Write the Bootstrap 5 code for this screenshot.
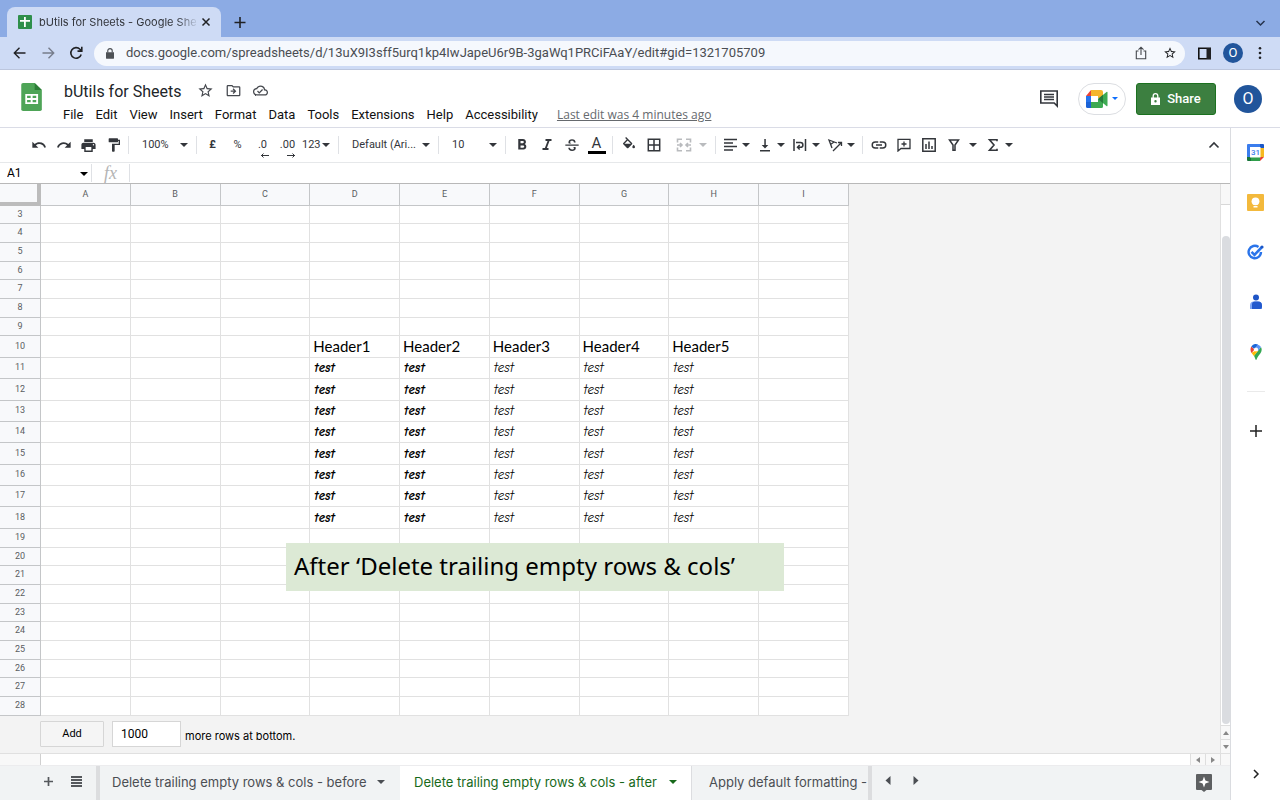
<!DOCTYPE html>
<html lang="en">
<head>
<meta charset="utf-8">
<meta name="viewport" content="width=device-width, initial-scale=1">
<title>bUtils for Sheets - Google Sheets</title>
<link href="https://cdn.jsdelivr.net/npm/bootstrap@5.3.0/dist/css/bootstrap.min.css" rel="stylesheet">
<style>
body{font-family:Roboto,"Liberation Sans",sans-serif;font-size:13px;line-height:16px;color:#000;background:#fff}
svg{display:block;flex:none}
svg:not([fill]){fill:currentColor}
button{font-family:inherit;color:inherit;background:none;border:0;padding:0}
.ic{display:flex;align-items:center;justify-content:center;flex:none}
.caret{width:0;height:0;border:4px solid transparent;border-top-color:currentColor;border-bottom:0;flex:none}
/* browser */
.strip{height:37px;background:#8cabe4;padding:7px 8px 0 7px}
.btab{width:214px;height:30px;background:#cedbf5;border-radius:8px 8px 0 0;padding:0 10px 0 11px;font:11px/16px Inter,sans-serif;color:#33363c}
.btab-title{width:160px;margin-left:7px;-webkit-mask-image:linear-gradient(90deg,#000 86%,transparent)}
.addr{height:33px;background:#cedbf5;border-bottom:1px solid #bcc6dd;padding:0 18px 0 11px;color:#202124}
.addr-icon{margin-left:10px}
.omni{height:25px;background:#f5f8fd;border-radius:13px;padding:0 8px 0 12px;margin-left:9px;margin-right:9px}
.omni input{border:0;background:none;padding:0;font-size:13px;color:#4a4d52;outline:0;min-width:0}
.face{border-radius:50%;background:#21559b;color:#fff}
.face-small{width:20px;height:20px;margin:0 11px 0 12px}
.face-large{width:28px;height:28px;font-size:16px;margin-left:18px}
/* document header */
.dochead{height:58px;border-bottom:1px solid #dadce6;padding:0 18px 0 16px}
.doctitle{font-size:16px;line-height:20px;margin:0;font-weight:400}
.docmenu{gap:12px;margin:5px 0 0 -1px}
.docmenu a{color:#111;text-decoration:none}
.docmenu a.edited{font-family:"Open Sans",sans-serif;font-size:12px;color:#666a6e;text-decoration:underline;margin-left:7px}
.meet{width:48px;height:32px;border:1px solid #dcdee2;border-radius:16px;gap:4px}
.meet .caret{border-width:3px 3px 0}
.share{width:80px;height:32px;background:#3c7f40;border:1px solid #1b711f;border-radius:3px;color:#fff;font-size:13px;font-weight:500;gap:7px;margin-left:10px}
/* toolbar */
.tools{height:35px;border-bottom:1px solid #e6e8ea;padding-left:26px;font-size:11px;color:#33363b}
.tools button{height:24px;display:flex;align-items:center;flex:none}
.tb{width:25px;justify-content:center}
.tb-drop{width:35px;padding-left:3px;gap:4px}
.tb-wide{padding-left:5px;gap:7px;width:41px}
.tb-merge{padding-left:10px;gap:7px;width:46px;color:#b9bbbe}
.tb-text{justify-content:space-between;padding:0 5px 0 10px}
.tb-zoom{width:61px}.tb-font{width:93px}.tb-size{width:60px}
.tb-format{width:35px;padding-left:2px;gap:1px}
.tsep{width:1px;height:18px;background:#dfe1e5;margin:0 3px;flex:none}
.tools .tsep:first-of-type{margin-left:2px}
.tb-color{border-bottom:3px solid #000;line-height:15px;width:18px;font-size:15px}
.fbar{height:21px;border-bottom:1px solid #b8b8b8}
.fbar input{border:0;outline:0;padding:0;min-width:0}
.namebox{width:70px;font-size:12px;margin-left:7px}
.namedrop{width:14px;padding-top:2px}
.fx{font:italic 18px/18px "Liberation Serif",serif;color:#b4b4b4;padding:0 9px}
/* grid */
.canvas{background:#f3f3f3;min-height:0}
.sheetwrap{min-width:0}
.cells{width:849px;table-layout:fixed;border-collapse:separate;border-spacing:0;line-height:14px}
.cells th,.cells td{padding:0 0 0 3px;border-right:1px solid #e1e1e1;border-bottom:1px solid #e1e1e1;background:#fff;font-weight:400;overflow:hidden;white-space:nowrap;vertical-align:middle}
.cells tr{height:19px}
.cells thead tr{height:22px}
.cells thead th,.cells tbody th{background:#f8f9fb;color:#5a5d61;font:9px/14px Roboto,sans-serif;text-align:center;padding:0 0 2px;border-color:#c4c6c8}
.cells thead th:first-child{border-right:4px solid #bcbcbc;border-bottom:4px solid #bcbcbc}
.upper tr:nth-child(3n+1),.lower tr:nth-child(3n+2){height:18px}
.data tr{height:21px}
.data tr:first-child,.data tr:nth-child(3n){height:22px}
.data tr:first-child td{font:15px/18px Lato,sans-serif;padding-bottom:2px}
.cells .script{font:italic 13px/16px "Comic Neue",Lato,sans-serif;padding-left:4px}
.cells .heavy{font-weight:700}
.note{left:286px;top:359px;width:498px;height:48px;background:#dce9d5;padding:0 8px;font:24px/46px "Noto Sans",sans-serif}
.addrow{padding:5px 0 0 40px;gap:8px}
.addrow button{width:64px;height:26px;border:1px solid #d6d6d6;background:#f5f5f5;font-size:11px;border-radius:1px}
.addrow input{width:69px;height:26px;border:1px solid #d6d6d6;padding:0 8px;font-size:12px;border-radius:0}
.addrow label{font:11px/16px Inter,sans-serif;margin:4px 0 0 -4px}
.vbar{width:10px;border-left:1px solid #e0e0e0;background:#fff}
.vcap{height:21px;border-bottom:1px solid #d8d8d8;background:#f8f8f8}
.thumb{background:#dadce0;border-radius:4px;margin:31px 0 1px 1px}
.sbtn{background:#f8f8f8;border:0 solid #dedede;color:#888}
.vbar .sbtn{height:14px;border-top-width:1px}
.hbar{height:12px;border-top:1px solid #e0e0e0}
.hbar .sbtn{width:15px;border-left-width:1px}
.hbar .sbtn-corner{width:10px}
.hcap{width:41px;background:#f8f8f8;border-right:1px solid #d0d0d0}
/* sheet tabs */
.sheets{height:35px;background:#f1f3f4;font:13px/16px Inter,sans-serif;color:#4b4e53;border-top:1px solid #ececee}
.sheets-add{margin-left:42px}
.stab{height:34px;padding:0 13px 2px 12px;display:flex;align-items:center;gap:9px;white-space:nowrap}
.stab-first{width:304px;margin-left:14px;border-left:4px solid #dcdddf!important;padding-right:15px;justify-content:space-between}
.stab-on{background:#fff;color:#17691b;width:292px;padding:0 14px 2px;justify-content:space-between;border-right:1px solid #dcdde0!important}
.stab-cut{width:180px;padding:0 0 2px 17px;overflow:hidden;border-right:4px solid #dcdddf!important}
.sheets-nav{gap:22px;margin:0 auto 0 13px}
.explore{margin-right:18px}
.rail{width:50px;border-left:1px solid #dadce0;padding-top:14px}
.rail button{height:20px;margin-bottom:30px}
.rail hr{width:18px;margin:-1px 0 29px;border-color:#aaa}
</style>
</head>
<body class="vh-100 d-flex flex-column overflow-hidden">
<div class="strip d-flex">
  <div class="btab d-flex align-items-center">
    <svg width="14" height="14" viewBox="0 0 14 14"><rect width="14" height="14" rx="1" fill="#2f8f4b"/><path fill="#fff" d="M6 2h1.800v3H12v1.700H7.800V12H6V6.700H2V5h4z"/></svg>
    <span class="btab-title text-nowrap overflow-hidden">bUtils for Sheets - Google She</span>
    <button class="ic ms-auto" aria-label="Close tab"><svg width="10" height="10" viewBox="0 0 10 10" stroke="#202124" stroke-width="1.500"><path d="M1.500 1.500l7 7m0-7l-7 7"/></svg></button>
  </div>
  <button class="ic ms-2 ps-1" aria-label="New tab"><svg width="14" height="30" viewBox="0 0 14 30" stroke="#202124" stroke-width="1.600"><path d="M7 10v11M1.500 15.500h11"/></svg></button>
  <button class="ic ms-auto" aria-label="Search tabs"><svg width="24" height="28" viewBox="0 0 24 28" fill="none" stroke="#26334d" stroke-width="1.500"><path d="M8.500 13l4 4 4-4"/></svg></button>
</div>
<div class="addr d-flex align-items-center">
  <button class="ic" aria-label="Back"><svg width="18" height="18" viewBox="0 0 18 18" fill="none" stroke="currentColor" stroke-width="1.400"><path d="M14.500 9H3.500M8.500 3.800L3.300 9l5.200 5.200"/></svg></button>
  <button class="ic opacity-50 addr-icon" aria-label="Forward"><svg width="18" height="18" viewBox="0 0 18 18" fill="none" stroke="currentColor" stroke-width="1.400"><path d="M3.500 9h11M9.500 3.800L14.700 9l-5.200 5.200"/></svg></button>
  <button class="ic addr-icon" aria-label="Reload"><svg width="18" height="18" viewBox="0 0 18 18" fill="none" stroke="currentColor" stroke-width="1.600"><path d="M14.200 10.500A5.300 5.300 0 1 1 13 5.300L14.300 6.600M14.800 2.800v4.300h-4.300"/></svg></button>
  <div class="omni flex-fill d-flex align-items-center">
    <svg width="8" height="11" viewBox="0 0 9 12"><path fill="#4d5156" d="M0 4.500h9V11a1 1 0 0 1-1 1H1a1 1 0 0 1-1-1z"/><path d="M2 5V3a2.500 2.500 0 0 1 5 0v2" fill="none" stroke="#4d5156" stroke-width="1.300"/></svg>
    <input class="flex-fill ms-2 ps-1" aria-label="Address" value="docs.google.com/spreadsheets/d/13uX9I3sff5urq1kp4IwJapeU6r9B-3gaWq1PRCiFAaY/edit#gid=1321705709">
    <button class="ic" aria-label="Share page"><svg width="12" height="14" viewBox="0 0 12 14" fill="none" stroke="#44474d" stroke-width="1.100"><path d="M3.500 5H1.300v7.700h9.400V5H8.500M6 9V1.300M3.500 3.700L6 1.200l2.500 2.500"/></svg></button>
    <button class="ic ms-3" aria-label="Bookmark"><svg width="14" height="14" viewBox="0 0 24 24"><path d="M22 9.240l-7.190-.62L12 2 9.190 8.630 2 9.240l5.460 4.730L5.820 21 12 17.270 18.180 21l-1.630-7.030zM12 15.400l-3.760 2.270 1-4.280-3.320-2.880 4.380-.38L12 6.100l1.710 4.040 4.380.38-3.320 2.880 1 4.280z"/></svg></button>
  </div>
  <button class="ic ms-1" aria-label="Side panel"><svg width="13" height="13" viewBox="0 0 13 13"><path fill="none" stroke="#111" stroke-width="1.600" d="M.8 1.300h11.400v10.400H.8z"/><path d="M8.500 1H13v11H8.500z"/></svg></button>
  <button class="ic face face-small" aria-label="Profile">O</button>
  <button class="ic ms-1" aria-label="Browser menu"><svg width="4" height="14" viewBox="0 0 4 14"><circle cx="2" cy="2.200" r="1.300"/><circle cx="2" cy="7" r="1.300"/><circle cx="2" cy="11.800" r="1.300"/></svg></button>
</div>

<header class="dochead d-flex">
  <svg class="mt-2 pt-1" width="32" height="38" viewBox="0 0 32 38"><path fill="#4ea457" d="M6 1h13l8 8v21.500a2 2 0 0 1-2 2H6a2 2 0 0 1-2-2V3a2 2 0 0 1 2-2z"/><path fill="#2c7d37" d="M19 1l8 8h-8z"/><path fill="#fff" fill-rule="evenodd" d="M8.500 13.500h14.300v11H8.500zM10.500 15.500v2.500h4v-2.500zm6.200 0v2.500h4v-2.500zm-6.200 4.500v2.500h4V20zm6.200 0v2.500h4V20z"/></svg>
  <div class="ms-3">
    <div class="d-flex align-items-center pt-2 mt-0 text-dark">
      <h1 class="doctitle pt-1">bUtils for Sheets</h1>
      <button class="ic ms-3" aria-label="Star"><svg width="17" height="17" viewBox="0 0 24 24" fill="#44474d"><path d="M22 9.240l-7.190-.62L12 2 9.190 8.630 2 9.240l5.460 4.730L5.820 21 12 17.270 18.180 21l-1.630-7.030zM12 15.400l-3.760 2.270 1-4.280-3.320-2.880 4.380-.38L12 6.100l1.710 4.040 4.380.38-3.320 2.880 1 4.280z"/></svg></button>
      <button class="ic ms-2 ps-1" aria-label="Move"><svg width="15" height="15" viewBox="0 0 24 24" fill="#44474d"><path d="M21 5h-9l-2-2H3a2 2 0 0 0-2 2v14c0 1.100.9 2 2 2h18a2 2 0 0 0 2-2V7a2 2 0 0 0-2-2zm0 14H3V5h6.200l2 2H21zM12 8.500l4.500 4.500-4.500 4.500-1.400-1.400 2-2H7.500v-2h5.100l-2-2z"/></svg></button>
      <button class="ic ms-2 ps-1" aria-label="Saved to Drive"><svg width="15" height="15" viewBox="0 0 24 24" fill="#44474d"><path d="M19.350 10.040A7.490 7.490 0 0 0 12 4C9.110 4 6.600 5.640 5.350 8.040A5.994 5.994 0 0 0 0 14c0 3.310 2.690 6 6 6h13c2.760 0 5-2.240 5-5 0-2.640-2.050-4.780-4.650-4.960zM19 18H6c-2.210 0-4-1.790-4-4s1.790-4 4-4h.71C7.370 7.690 9.480 6 12 6c3.040 0 5.500 2.460 5.500 5.500v.5H19c1.660 0 3 1.340 3 3s-1.340 3-3 3zM10 14.200l-2.100-2.100-1.400 1.400L10 17l6-6-1.400-1.400z"/></svg></button>
    </div>
    <nav class="docmenu d-flex text-nowrap">
      <a href="#">File</a><a href="#">Edit</a><a href="#">View</a><a href="#">Insert</a><a href="#">Format</a><a href="#">Data</a><a href="#">Tools</a><a href="#">Extensions</a><a href="#">Help</a><a href="#">Accessibility</a><a href="#" class="edited">Last edit was 4 minutes ago</a>
    </nav>
  </div>
  <div class="ms-auto d-flex align-items-center">
    <button class="ic me-3 pe-1" aria-label="Comments"><svg width="18" height="18" viewBox="0 0 18 18"><path fill="none" stroke="#33363c" stroke-width="1.600" d="M.8 1h16.400v15l-3-3H.8z"/><path fill="none" stroke="#33363c" stroke-width="1.300" d="M4 4.500h10M4 7h10M4 9.500h10"/></svg></button>
    <button class="meet ic" aria-label="Meet"><svg width="22" height="18" viewBox="0 0 22 18"><path fill="#e94235" d="M0 6l5-6v6z"/><path fill="#f4b52b" d="M5 0h10a2 2 0 0 1 2 2v7l-5-1V6H5z"/><path fill="#2573ec" d="M0 6h5v6H0z"/><path fill="#1b62d6" d="M0 12h5v6H1.500A1.500 1.500 0 0 1 0 16.500z"/><path fill="#3daa53" d="M5 12h7v-3h5v7.500a1.500 1.500 0 0 1-1.500 1.500H5z"/><path fill="#fff" d="M5 6h7v6H5z"/><path fill="#3daa53" d="M12 9l8.500-7q1-.5 1 .6v13q0 1-1 .4z"/><path fill="#267a3b" d="M12 9l5-4.200v8.400z"/></svg><span class="caret text-primary"></span></button>
    <button class="share ic"><svg width="9" height="12" viewBox="0 0 9 12"><path fill="none" stroke="#fff" stroke-width="1.300" d="M2.200 5V3a2.300 2.300 0 0 1 4.600 0v2"/><path fill-rule="evenodd" d="M0 4.500h9V12H0zM4.500 7a1.200 1.200 0 1 0 0 2.400A1.200 1.200 0 0 0 4.500 7z"/></svg>Share</button>
    <button class="face face-large ic" aria-label="Account">O</button>
  </div>
</header>

<div class="d-flex flex-fill canvas bg-white">
  <main class="flex-fill d-flex flex-column sheetwrap">
    <div class="tools d-flex align-items-center" role="toolbar">
      <button class="tb" aria-label="Undo"><svg width="16" height="16" viewBox="0 0 24 24"><path d="M12.500 8c-2.650 0-5.050.99-6.900 2.600L2 7v9h9l-3.620-3.620a8 8 0 0 1 12.720 3.720l2.370-.78A10.500 10.500 0 0 0 12.500 8z"/></svg></button>
      <button class="tb" aria-label="Redo"><svg width="16" height="16" viewBox="0 0 24 24"><path d="M18.400 10.600A10.500 10.500 0 0 0 1.540 15.320l2.360.78a8 8 0 0 1 12.710-3.720L13 16h9V7z"/></svg></button>
      <button class="tb" aria-label="Print"><svg width="17" height="17" viewBox="0 0 24 24"><path fill-rule="evenodd" d="M19 8H5c-1.660 0-3 1.340-3 3v6h4v4h12v-4h4v-6c0-1.660-1.340-3-3-3zm-3 11H8v-5h8v5zm3-7a1 1 0 1 1 0-2 1 1 0 0 1 0 2zM18 3H6v4h12z"/></svg></button>
      <button class="tb" aria-label="Paint format"><svg width="16" height="16" viewBox="0 0 24 24"><path d="M18 4V3a1 1 0 0 0-1-1H5a1 1 0 0 0-1 1v4c0 .55.45 1 1 1h12c.55 0 1-.45 1-1V6h1v4H9v11c0 .55.45 1 1 1h2c.55 0 1-.45 1-1v-9h8V4z"/></svg></button>
      <i class="tsep"></i>
      <button class="tb-text tb-zoom">100%<span class="caret"></span></button>
      <i class="tsep"></i>
      <button class="tb fw-bold">£</button>
      <button class="tb">%</button>
      <button class="tb" aria-label="Decrease decimal places"><span class="ic flex-column pt-1"><span>.0</span><svg width="9" height="5" viewBox="0 0 9 5" stroke="currentColor" class="ms-1"><path d="M1 2.500h8M3.500.5l-2 2 2 2" fill="none"/></svg></span></button>
      <button class="tb" aria-label="Increase decimal places"><span class="ic flex-column pt-1"><span>.00</span><svg width="9" height="5" viewBox="0 0 9 5" stroke="currentColor" class="ms-2"><path d="M0 2.500h8M5.500.5l2 2-2 2" fill="none"/></svg></span></button>
      <button class="tb-format">123<span class="caret"></span></button>
      <i class="tsep"></i>
      <button class="tb-text tb-font">Default (Ari...<span class="caret"></span></button>
      <i class="tsep"></i>
      <button class="tb-text tb-size">10<span class="caret"></span></button>
      <i class="tsep"></i>
      <button class="tb" aria-label="Bold"><svg width="18" height="18" viewBox="0 0 24 24"><path d="M15.600 10.790c.97-.67 1.650-1.770 1.650-2.790 0-2.260-1.750-4-4-4H7v14h7.040c2.090 0 3.710-1.700 3.710-3.790 0-1.520-.86-2.820-2.150-3.420zM10 6.500h3a1.500 1.500 0 0 1 0 3h-3zm3.500 9H10v-3h3.500a1.500 1.500 0 0 1 0 3z"/></svg></button>
      <button class="tb" aria-label="Italic"><svg width="18" height="18" viewBox="0 0 24 24"><path d="M10 4v2.500h2.700L9.200 16H6v2.500h8V16h-2.200l3.500-9.500H18V4z"/></svg></button>
      <button class="tb" aria-label="Strikethrough"><svg width="16" height="16" viewBox="0 0 24 24"><path d="M2 11.300h20v1.900H2zM17.500 8.300h-2.600c0-1.600-1-2.500-2.900-2.500-1.700 0-2.700.8-2.700 1.900 0 .9.600 1.400 1.700 1.900H7.200A3.600 3.600 0 0 1 6.700 7.700C6.700 5.200 8.900 3.500 12 3.500c3.400 0 5.500 1.900 5.500 4.800zM6.400 16.300H9c0 1.700 1.200 2.500 3.100 2.500 1.700 0 2.800-.7 2.800-1.900 0-.9-.5-1.500-1.300-2h3.500c.3.600.5 1.200.5 2 0 2.600-2.200 4.200-5.500 4.200-3.500 0-5.700-1.900-5.700-4.800z"/></svg></button>
      <button class="tb" aria-label="Text colour"><span class="tb-color text-center">A</span></button>
      <i class="tsep"></i>
      <button class="tb" aria-label="Fill colour"><svg width="16" height="16" viewBox="0 0 24 24"><path d="M16.560 8.940L7.620 0 6.210 1.410l2.380 2.380-5.150 5.150a1.490 1.490 0 0 0 0 2.120l5.500 5.500c.29.290.68.440 1.060.44s.77-.15 1.060-.44l5.500-5.500c.59-.58.59-1.530 0-2.120zM5.210 10L10 5.210 14.790 10zM19 11.500s-2 2.170-2 3.500a2 2 0 1 0 4 0c0-1.330-2-3.500-2-3.500z"/></svg></button>
      <button class="tb" aria-label="Borders"><svg width="14" height="14" viewBox="0 0 14 14" fill="none" stroke="currentColor" stroke-width="1.500"><path d="M1.300 1.300h11.400v11.400H1.300zM7 1v12M1 7h12"/></svg></button>
      <button class="tb-merge" aria-label="Merge cells"><svg width="16" height="14" viewBox="0 0 16 14" fill="none" stroke="currentColor" stroke-width="1.600"><path d="M6 1.300H1.500V4.500M1.500 9.500v3.200H6M10 1.300h4.500V4.500M14.500 9.500v3.200H10M1 7h5M4 5l2 2-2 2M15 7h-5M12 5l-2 2 2 2"/></svg><span class="caret"></span></button>
      <i class="tsep"></i>
      <button class="tb-drop" aria-label="Horizontal align"><svg width="16" height="14" viewBox="0 0 16 14" stroke="currentColor" stroke-width="1.500"><path d="M2 1.500h13M2 5h9M2 8.500h13M2 12h9"/></svg><span class="caret"></span></button>
      <button class="tb-drop" aria-label="Vertical align"><svg width="16" height="14" viewBox="0 0 16 14"><path d="M3 12h10v1.500H3zM7.300 1h1.500v6h2.500L8 10.500 4.700 7h2.600z"/></svg><span class="caret"></span></button>
      <button class="tb-drop" aria-label="Text wrapping"><svg width="16" height="14" viewBox="0 0 16 14" fill="none" stroke="currentColor" stroke-width="1.500"><path d="M2 1v12M13.500 1v12M4 4.500h4.500a2.300 2.300 0 0 1 0 4.800H6M7.700 7L5.500 9.300l2.200 2.200"/></svg><span class="caret"></span></button>
      <button class="tb-drop" aria-label="Text rotation"><svg width="16" height="14" viewBox="0 0 16 14" fill="none" stroke="currentColor" stroke-width="1.300"><path d="M5 10L2 2l8 3M3.500 6.500L7 4M6 13l8-8M11 4.500h3.500V8"/></svg><span class="caret"></span></button>
      <i class="tsep"></i>
      <button class="tb" aria-label="Insert link"><svg width="18" height="18" viewBox="0 0 24 24"><path d="M3.900 12A3.100 3.100 0 0 1 7 8.900h4V7H7a5 5 0 0 0 0 10h4v-1.900H7A3.100 3.100 0 0 1 3.900 12zM8 13h8v-2H8zm9-6h-4v1.900h4a3.100 3.100 0 0 1 0 6.200h-4V17h4a5 5 0 0 0 0-10z"/></svg></button>
      <button class="tb" aria-label="Insert comment"><svg width="14" height="14" viewBox="0 0 14 14" fill="none" stroke="currentColor" stroke-width="1.300"><path d="M1 1.300h12v9.200H4L1 13zM7 3.500v5M4.500 6h5"/></svg></button>
      <button class="tb" aria-label="Insert chart"><svg width="14" height="14" viewBox="0 0 14 14" fill="none" stroke="currentColor" stroke-width="1.500"><path d="M.8.800h12.400v12.400H.8zM4 6v5M7 3.500V11M10 8v3"/></svg></button>
      <button class="tb-wide" aria-label="Filter"><svg width="16" height="14" viewBox="0 0 16 14" fill="none" stroke="currentColor" stroke-width="1.500"><path d="M3.500 2h9L9 7v5.200H7V7z"/></svg><span class="caret"></span></button>
      <button class="tb-drop" aria-label="Functions"><svg width="16" height="14" viewBox="0 0 16 14" fill="none" stroke="currentColor" stroke-width="1.600"><path d="M12 3.200V1.800H4.500L9 7l-4.500 5.200H12v-1.500"/></svg><span class="caret"></span></button>
      <button class="tb ms-auto me-1" aria-label="Hide menus"><svg width="12" height="8" viewBox="0 0 12 8" fill="none" stroke="currentColor" stroke-width="1.600"><path d="M1.500 6.500L6 2l4.500 4.500"/></svg></button>
    </div>
    <div class="fbar d-flex align-items-center">
      <input class="namebox" aria-label="Name box" value="A1">
      <button class="ic namedrop" aria-label="Named ranges"><span class="caret"></span></button>
      <i class="tsep ms-0"></i>
      <label for="fxin" class="fx">fx</label>
      <i class="tsep"></i>
      <input id="fxin" class="flex-fill">
    </div>
    <div class="canvas flex-fill d-flex overflow-hidden">
      <div class="sheetwrap flex-fill position-relative overflow-hidden">
        <table class="cells" id="cells">
          <colgroup><col style="width:41px"><col span="9"></colgroup>
          <thead><tr><th></th><th>A</th><th>B</th><th>C</th><th>D</th><th>E</th><th>F</th><th>G</th><th>H</th><th>I</th></tr></thead>
          <tbody class="upper"></tbody>
          <tbody class="data"></tbody>
          <tbody class="lower"></tbody>
        </table>
        <div class="addrow d-flex align-items-center">
          <button>Add</button><input id="more" value="1000"><label for="more">more rows at bottom.</label>
        </div>
        <div class="note position-absolute text-nowrap">After ‘Delete trailing empty rows &amp; cols’</div>
      </div>
      <div class="vbar d-flex flex-column">
        <div class="vcap"></div><div class="thumb flex-fill"></div>
        <button class="sbtn ic" aria-label="Scroll up"><svg width="6" height="4" viewBox="0 0 6 4"><path d="M0 4l3-4 3 4z"/></svg></button>
        <button class="sbtn ic" aria-label="Scroll down"><svg width="6" height="4" viewBox="0 0 6 4"><path d="M0 0h6L3 4z"/></svg></button>
      </div>
    </div>
    <div class="hbar d-flex">
      <div class="hcap me-auto"></div>
      <button class="sbtn ic" aria-label="Scroll left"><svg width="4" height="6" viewBox="0 0 4 6"><path d="M4 0v6L0 3z"/></svg></button>
      <button class="sbtn ic" aria-label="Scroll right"><svg width="4" height="6" viewBox="0 0 4 6"><path d="M0 0v6l4-3z"/></svg></button>
      <div class="sbtn sbtn-corner"></div>
    </div>
    <div class="sheets d-flex align-items-center">
      <button class="ic sheets-add pb-1" aria-label="Add sheet"><svg width="13" height="13" viewBox="0 0 13 13" stroke="#55585c" stroke-width="1.700"><path d="M6.500 2v9M2 6.500h9"/></svg></button>
      <button class="ic ms-3 pb-1" aria-label="All sheets"><svg width="11" height="11" viewBox="0 0 11 11" stroke="#55585c" stroke-width="1.800"><path d="M0 1h11M0 4h11M0 7h11M0 10h11"/></svg></button>
      <button class="stab stab-first"><span>Delete trailing empty rows &amp; cols - before</span><span class="caret"></span></button>
      <button class="stab stab-on"><span>Delete trailing empty rows &amp; cols - after</span><span class="caret"></span></button>
      <button class="stab stab-cut">Apply default formatting -</button>
      <div class="d-flex sheets-nav pb-1">
        <button class="ic" aria-label="Previous sheets"><svg width="6" height="10" viewBox="0 0 6 10"><path d="M5.500 0v9L.5 4.500z"/></svg></button>
        <button class="ic" aria-label="Next sheets"><svg width="6" height="10" viewBox="0 0 6 10"><path d="M.5 0v9l5-4.500z"/></svg></button>
      </div>
      <button class="ic explore" aria-label="Explore"><svg width="16" height="18" viewBox="0 0 16 18"><path fill="#5d5f61" d="M1 0h14a1 1 0 0 1 1 1v14a1 1 0 0 1-1 1h-4.500L8 18l-2.500-2H1a1 1 0 0 1-1-1V1a1 1 0 0 1 1-1z"/><path fill="#fff" d="M8 2.500l1.400 4.100L13.500 8 9.400 9.400 8 13.500 6.600 9.400 2.500 8l4.100-1.400z"/></svg></button>
    </div>
  </main>
  <aside class="rail d-flex flex-column align-items-center">
    <button class="ic" aria-label="Calendar"><svg width="17" height="17" viewBox="0 0 17 17"><path fill="#3b7ded" d="M1 0h12v4H4v9H0V1a1 1 0 0 1 1-1z"/><path fill="#1b57c8" d="M13 0h3a1 1 0 0 1 1 1v3h-4z"/><path fill="#f6b91f" d="M13 4h4v9h-4z"/><path fill="#2f9e4b" d="M4 13h9v4H4z"/><path fill="#18753a" d="M0 13h4v4H1a1 1 0 0 1-1-1z"/><path fill="#e5402f" d="M13 13h4l-4 4z"/><path fill="#fff" d="M3 3h10.500v10.500H3z"/><text x="4" y="11" font-size="8" font-weight="500" fill="#3b7ded">31</text></svg></button>
    <button class="ic" aria-label="Keep"><svg width="17" height="17" viewBox="0 0 17 17"><rect width="17" height="17" rx="1" fill="#f3b93c"/><circle cx="8.500" cy="7.300" r="3.900" fill="#fff"/><path fill="#fff" d="M6.500 9h4v2h-4zM6.500 12h4v1.500h-4z"/></svg></button>
    <button class="ic" aria-label="Tasks"><svg width="17" height="17" viewBox="0 0 17 17" fill="none"><path stroke="#2a74ea" stroke-width="2.400" d="M11.500 3A6.200 6.200 0 1 0 14 8"/><path stroke="#2a74ea" stroke-width="2.600" d="M4.500 7.800l3 3L14.500 3.500"/><circle cx="15" cy="3" r="1.600" fill="#1b57c8"/></svg></button>
    <button class="ic" aria-label="Contacts"><svg width="14" height="16" viewBox="0 0 14 16"><circle cx="7" cy="3.500" r="3" fill="#1f55c6"/><path fill="#7fa6f5" d="M1 15V11.500a4 4 0 0 1 4-4h4a4 4 0 0 1 4 4V15z"/><path fill="#2259cd" d="M3 15v-4.500a3 3 0 0 1 3-3h3a4 4 0 0 1 4 4V13a2 2 0 0 1-2 2z"/></svg></button>
    <button class="ic" aria-label="Maps"><svg width="12" height="16" viewBox="0 0 12 16"><path fill="#34a853" d="M6 16c-.7 0-.9-2.500-2-4.200L11 3c2 4-.8 6.800-2.800 9.200C7 13.700 6.700 16 6 16z"/><path fill="#fbbc04" d="M1.500 8.800L5 7l3 0-4.200 5C3 10.800 2 10 1.500 8.800z"/><path fill="#e94235" d="M1.300 2.500l3.200 3L1.600 9C.2 7 .2 4.500 1.300 2.500z"/><path fill="#1a66d8" d="M1.300 2.500A5.400 5.400 0 0 1 8 .6L5 5.500z"/><path fill="#5b94f5" d="M7.500.5A5.500 5.500 0 0 1 11 3L8 7 5.500 4z"/><circle cx="6" cy="5.500" r="2.100" fill="#fff"/></svg></button>
    <hr>
    <button class="ic" aria-label="Get add-ons"><svg width="14" height="14" viewBox="0 0 14 14" stroke="#222" stroke-width="1.500"><path d="M7 1v12M1 7h12"/></svg></button>
    <button class="ic mt-auto mb-3" aria-label="Hide side panel"><svg width="8" height="10" viewBox="0 0 8 10" fill="none" stroke="#222" stroke-width="1.500"><path d="M2 1l4 4-4 4"/></svg></button>
  </aside>
</div>
<script>
// Rows 3 to 28: headers in row 10, values in rows 11 to 18, columns D to H.
const body = s => document.querySelector('#cells .' + s);
const row = (n, cell) => `<tr><th>${n}</th>${Array.from({length: 9}, (_, c) => cell(c)).join('')}</tr>`;
const blank = () => '<td></td>';
const filled = c => c > 2 && c < 8;
for (let n = 3; n < 10; n++) body('upper').innerHTML += row(n, blank);
body('data').innerHTML += row(10, c => filled(c) ? `<td>Header${c - 2}</td>` : blank());
for (let n = 11; n < 19; n++) body('data').innerHTML += row(n, c => filled(c) ? `<td class="script${c < 5 ? ' heavy' : ''}">test</td>` : blank());
for (let n = 19; n < 29; n++) body('lower').innerHTML += row(n, blank);
</script>
<script src="https://cdn.jsdelivr.net/npm/bootstrap@5.3.0/dist/js/bootstrap.bundle.min.js"></script>
</body>
</html>
